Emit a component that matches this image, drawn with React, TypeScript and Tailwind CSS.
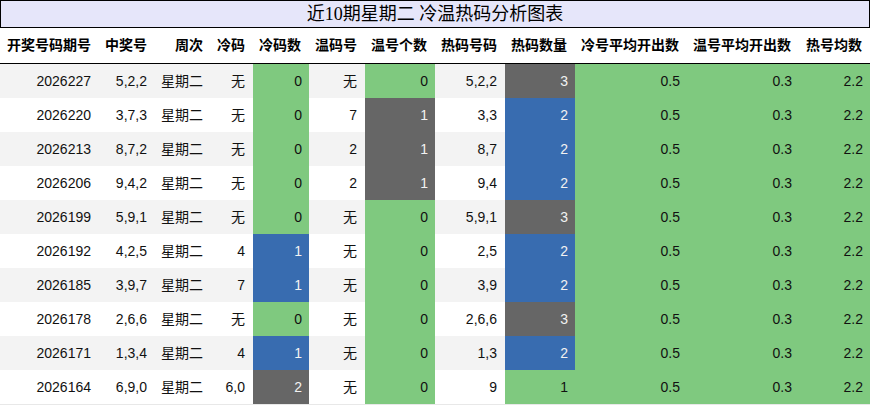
import React from "react";

type Row = string[];

const rows: Row[] = [
  ["2026227", "5,2,2", "星期二", "无", "0", "无", "0", "5,2,2", "3"],
  ["2026220", "3,7,3", "星期二", "无", "0", "7", "1", "3,3", "2"],
  ["2026213", "8,7,2", "星期二", "无", "0", "2", "1", "8,7", "2"],
  ["2026206", "9,4,2", "星期二", "无", "0", "2", "1", "9,4", "2"],
  ["2026199", "5,9,1", "星期二", "无", "0", "无", "0", "5,9,1", "3"],
  ["2026192", "4,2,5", "星期二", "4", "1", "无", "0", "2,5", "2"],
  ["2026185", "3,9,7", "星期二", "7", "1", "无", "0", "3,9", "2"],
  ["2026178", "2,6,6", "星期二", "无", "0", "无", "0", "2,6,6", "3"],
  ["2026171", "1,3,4", "星期二", "4", "1", "无", "0", "1,3", "2"],
  ["2026164", "6,9,0", "星期二", "6,0", "2", "无", "0", "9", "1"],
];

const headers = [
  "开奖号码期号",
  "中奖号",
  "周次",
  "冷码",
  "冷码数",
  "温码号",
  "温号个数",
  "热码号码",
  "热码数量",
  "冷号平均开出数",
  "温号平均开出数",
  "热号均数",
];

const GREEN = "bg-[#7fc97f] text-[#111]";
const BLUE = "bg-[#386cb0] text-[#f2f2f2]";
const GRAY = "bg-[#666666] text-[#f2f2f2]";

function coldColor(v: string) {
  if (v === "0") return GREEN;
  if (v === "1") return BLUE;
  return GRAY;
}
function warmColor(v: string) {
  if (v === "0") return GREEN;
  return GRAY;
}
function hotColor(v: string) {
  if (v === "1") return GREEN;
  if (v === "2") return BLUE;
  return GRAY;
}

const grid =
  "grid grid-cols-[99px_56px_56px_42px_56px_56px_70px_70px_70px_112px_112px_71px]";

export default function App() {
  return (
    <div
      className="w-[870px] h-[405px] bg-white text-[14px] text-[#111] overflow-hidden"
      style={{ fontFamily: '"Liberation Sans", "Noto Sans CJK SC", sans-serif' }}
    >
      <div
        className="h-[28px] border border-black bg-[#e6e6fa] flex items-center justify-center text-[18px] text-black"
        style={{ fontFamily: '"Liberation Serif", "Noto Sans CJK SC", serif' }}
      >
        近10期星期二 冷温热码分析图表
      </div>
      <div className={`${grid} h-[36px] border-b border-black`}>
        {headers.map((h) => (
          <div key={h} className="flex items-center justify-end pr-[8px] font-bold text-black whitespace-nowrap">
            {h}
          </div>
        ))}
      </div>
      <div className="border-b border-[#e8e8e8]">
        {rows.map((r, i) => (
          <div key={r[0]} className={`${grid} h-[34px] ${i % 2 === 0 ? "bg-[#f3f3f3]" : "bg-white"}`}>
            <div className="flex items-center justify-end pr-[8px]">{r[0]}</div>
            <div className="flex items-center justify-end pr-[8px]">{r[1]}</div>
            <div className="flex items-center justify-end pr-[8px]">{r[2]}</div>
            <div className="flex items-center justify-end pr-[8px]">{r[3]}</div>
            <div className={`flex items-center justify-end pr-[7px] ${coldColor(r[4])}`}>{r[4]}</div>
            <div className="flex items-center justify-end pr-[8px]">{r[5]}</div>
            <div className={`flex items-center justify-end pr-[7px] ${warmColor(r[6])}`}>{r[6]}</div>
            <div className="flex items-center justify-end pr-[8px]">{r[7]}</div>
            <div className={`flex items-center justify-end pr-[7px] ${hotColor(r[8])}`}>{r[8]}</div>
            <div className={`flex items-center justify-end pr-[7px] ${GREEN}`}>0.5</div>
            <div className={`flex items-center justify-end pr-[7px] ${GREEN}`}>0.3</div>
            <div className={`flex items-center justify-end pr-[7px] ${GREEN}`}>2.2</div>
          </div>
        ))}
      </div>
    </div>
  );
}
